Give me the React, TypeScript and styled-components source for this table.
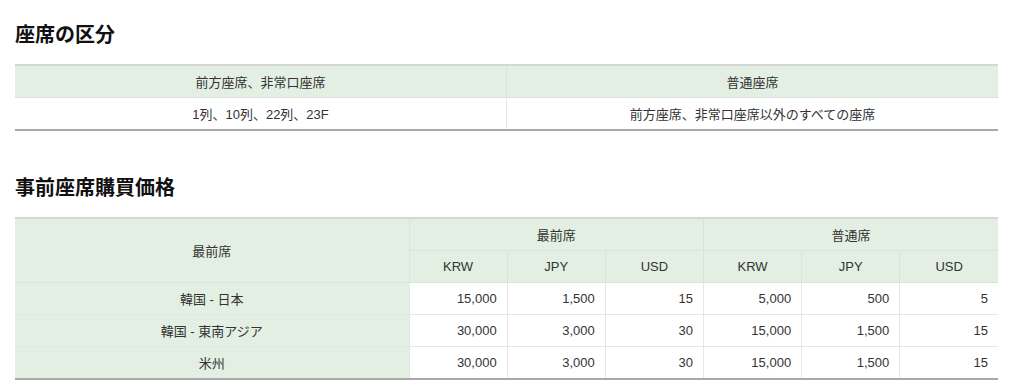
import styled, { createGlobalStyle } from "styled-components";

const GlobalStyle = createGlobalStyle`
  body {
    margin: 0;
    background: #fff;
    font-family: "Liberation Sans", "Noto Sans CJK JP", sans-serif;
    color: #333;
  }
`;

const Page = styled.div`
  width: 983px;
  padding: 0 0 0 15px;
`;

const Heading = styled.h2<{ $top: number }>`
  margin: ${(p) => p.$top}px 0 15px;
  font-size: 20px;
  line-height: 28px;
  font-weight: bold;
  color: #111;
`;

const Table = styled.table`
  width: 100%;
  border-collapse: collapse;
  table-layout: fixed;
  border-top: 2px solid #d6d6d6;
  border-bottom: 2px solid #a9a9a9;
  font-size: 13px;
`;

const Th = styled.th`
  background: #e2efe2;
  font-weight: normal;
  color: #333;
  height: 31px;
  padding: 0 10px;
  text-align: center;
  border: 1px solid #d9e3d9;
  &:first-child {
    border-left: none;
  }
  &:last-child {
    border-right: none;
  }
`;

const Td = styled.td<{ $num?: boolean; $label?: boolean }>`
  height: 31px;
  padding: 0 10px;
  text-align: ${(p) => (p.$num ? "right" : "center")};
  background: ${(p) => (p.$label ? "#e2efe2" : "#fff")};
  border: 1px solid #e6e6e6;
  &:first-child {
    border-left: none;
  }
  &:last-child {
    border-right: none;
  }
`;

const prices = [
  { route: "韓国 - 日本", v: ["15,000", "1,500", "15", "5,000", "500", "5"] },
  { route: "韓国 - 東南アジア", v: ["30,000", "3,000", "30", "15,000", "1,500", "15"] },
  { route: "米州", v: ["30,000", "3,000", "30", "15,000", "1,500", "15"] },
];

const App = () => (
  <Page>
    <GlobalStyle />
    <Heading $top={21}>座席の区分</Heading>
    <Table>
      <thead>
        <tr>
          <Th>前方座席、非常口座席</Th>
          <Th>普通座席</Th>
        </tr>
      </thead>
      <tbody>
        <tr>
          <Td>1列、10列、22列、23F</Td>
          <Td>前方座席、非常口座席以外のすべての座席</Td>
        </tr>
      </tbody>
    </Table>

    <Heading $top={43}>事前座席購買価格</Heading>
    <Table>
      <colgroup>
        <col style={{ width: 394 }} />
        <col />
        <col />
        <col />
        <col />
        <col />
        <col />
      </colgroup>
      <thead>
        <tr>
          <Th rowSpan={2}>最前席</Th>
          <Th colSpan={3}>最前席</Th>
          <Th colSpan={3}>普通席</Th>
        </tr>
        <tr>
          <Th>KRW</Th>
          <Th>JPY</Th>
          <Th>USD</Th>
          <Th>KRW</Th>
          <Th>JPY</Th>
          <Th>USD</Th>
        </tr>
      </thead>
      <tbody>
        {prices.map((r) => (
          <tr key={r.route}>
            <Td $label>{r.route}</Td>
            {r.v.map((x, i) => (
              <Td key={i} $num>
                {x}
              </Td>
            ))}
          </tr>
        ))}
      </tbody>
    </Table>
  </Page>
);

export default App;
